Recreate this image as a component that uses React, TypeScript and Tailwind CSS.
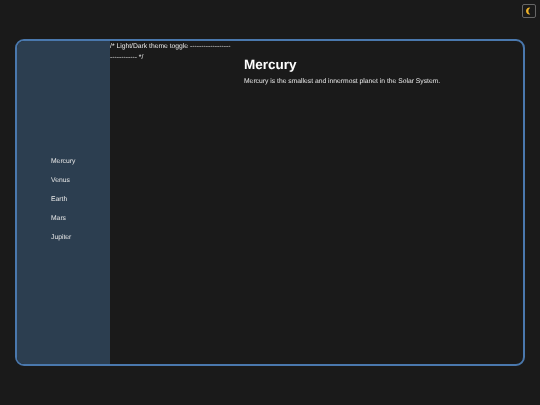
const planets = ['Mercury', 'Venus', 'Earth', 'Mars', 'Jupiter'];

export default function App() {
  return (
    <div className="relative h-[405px] w-[540px] overflow-hidden bg-[#1a1a1a] px-[15px] pt-[39px] font-['Liberation_Sans',Arial,sans-serif] text-[#e8e8e8] blur-[0.3px] [text-rendering:geometricPrecision]">
      {/* Theme toggle */}
      <button className="absolute right-[4px] top-[4px] flex h-[14px] w-[14px] items-center justify-center rounded-[2px] border border-[#666] bg-[#1a1a1a]">
        <svg viewBox="0 0 10 10" className="h-[8px] w-[8px]">
          <path d="M6.5 0.8 A4.3 4.3 0 1 0 6.5 9.2 A5 5 0 0 1 6.5 0.8 Z" fill="#f0b429" />
        </svg>
      </button>

      <div className="flex h-[327px] w-[510px] overflow-hidden rounded-[9px] border-2 border-[#4a78ad]">
        <nav className="flex w-[93px] shrink-0 flex-col justify-center gap-[9px] bg-[#2c3e50] pb-[6px] pl-[34px]">
          {planets.map((planet) => (
            <a key={planet} className="text-[6.75px] leading-[10px] text-[#e8e8e8]">
              {planet}
            </a>
          ))}
        </nav>

        <div className="w-[134px] shrink-0 text-[6.75px] leading-[11px]">
          <p>/* Light/Dark theme toggle ------------------</p>
          <p>------------ */</p>
        </div>

        <main className="pt-[15px]">
          <h1 className="text-[13.5px] font-bold leading-[18px] text-white">Mercury</h1>
          <p className="mt-[3px] text-[6.75px] leading-[10px]">
            Mercury is the smallest and innermost planet in the Solar System.
          </p>
        </main>
      </div>
    </div>
  );
}
